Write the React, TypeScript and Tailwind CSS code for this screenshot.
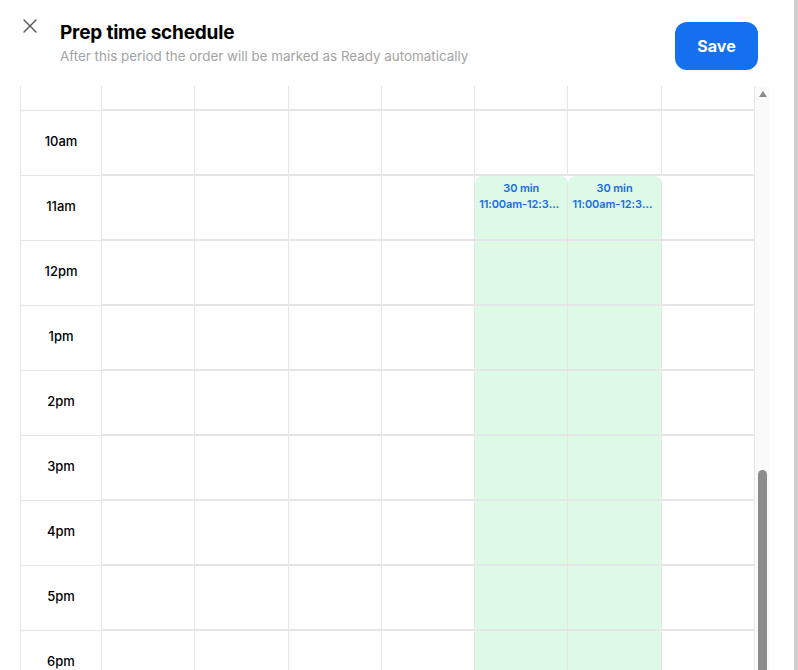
import clsx from "clsx";

const hours = ["10am", "11am", "12pm", "1pm", "2pm", "3pm", "4pm", "5pm", "6pm"];
const days = [0, 1, 2, 3, 4, 5, 6];

// columns 4 and 5 hold the 30 min block starting at 11am
const blockCols = [4, 5];
const blockStart = 1;

function CloseIcon() {
  return (
    <svg width="16" height="16" viewBox="0 0 16 16" className="text-[#555]">
      <path d="M2 2L14 14M14 2L2 14" stroke="currentColor" strokeWidth="1.4" strokeLinecap="round" />
    </svg>
  );
}

function Cell({ row, col }: { row: number; col: number }) {
  const inBlock = blockCols.includes(col) && row >= blockStart;
  const isHead = inBlock && row === blockStart;
  return (
    <div
      className={clsx(
        "h-[65px] min-w-0 border-r border-b-2 border-[#e6e6e8]",
        inBlock && "bg-[#dcfae6]",
        isHead && "rounded-t-lg",
      )}
    >
      {isHead && (
        <div className="flex flex-col items-center px-1 pt-[4px] text-[11px] font-semibold leading-4 tracking-[-0.1px] text-[#1a6be8]">
          <span>30 min</span>
          <span className="w-full truncate text-center">11:00am-12:30pm</span>
        </div>
      )}
    </div>
  );
}

export default function App() {
  return (
    <div className="flex h-[670px] w-[798px] overflow-hidden bg-white font-['Inter',sans-serif] text-black">
      <div className="flex min-w-0 flex-1 flex-col">
        <header className="flex h-[86px] shrink-0 items-start pl-[22px] pr-[36px]">
          <button type="button" className="mt-[18px] grid size-4 place-items-center">
            <CloseIcon />
          </button>
          <div className="ml-[22px] mt-[21px] flex-1">
            <h1 className="text-[19px] font-bold leading-6 tracking-[-0.2px]">Prep time schedule</h1>
            <p className="mt-[1px] text-[13.4px] leading-5 text-[#a3a3a3]">
              After this period the order will be marked as Ready automatically
            </p>
          </div>
          <button
            type="button"
            className="mt-[22px] h-[48px] w-[83px] rounded-xl bg-[#1570ef] text-[16px] font-bold text-white"
          >
            Save
          </button>
        </header>

        <div className="flex min-h-0 flex-1 pl-5">
          <div className="min-h-0 flex-1 overflow-hidden">
            <div className="grid grid-cols-[81px_repeat(7,minmax(0,1fr))] border-l border-[#e6e6e8]">
              <div className="h-[25px] border-r border-b border-[#e6e6e8]" />
              {days.map((d) => (
                <div key={d} className="h-[25px] border-r border-b-2 border-[#e6e6e8]" />
              ))}
              {hours.map((h, row) => (
                <div key={h} className="contents">
                  <div className="flex h-[65px] items-center justify-center border-r border-b border-[#e6e6e8] pb-[2px] text-[13px] font-medium">
                    {h}
                  </div>
                  {days.map((d) => (
                    <Cell key={d} row={row} col={d} />
                  ))}
                </div>
              ))}
            </div>
          </div>

          <div className="flex w-[15px] shrink-0 flex-col items-center bg-[#fafafa]">
            <svg width="8" height="6" viewBox="0 0 8 6" className="mt-[5px] text-[#8a8a8a]">
              <path d="M4 0L8 6H0Z" fill="currentColor" />
            </svg>
            <div className="flex-1" />
            <div className="h-[200px] w-[9px] rounded-t-full bg-[#8c8c8c]" />
          </div>
          <div className="w-[24px] shrink-0" />
        </div>
      </div>
      <div className="w-[4px] shrink-0 bg-[#cfcfcf]" />
    </div>
  );
}
